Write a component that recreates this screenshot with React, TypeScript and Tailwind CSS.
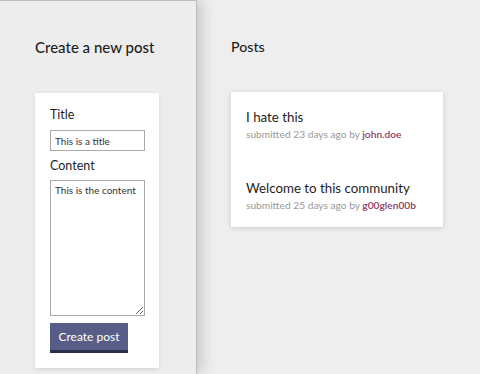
export default function App() {
  return (
    <div
      className="flex w-[480px] h-[374px] overflow-hidden bg-[#eeeeee] text-[#222]"
      style={{ fontFamily: 'Lato, "Open Sans", sans-serif' }}
    >
      <div className="relative z-10 flex flex-col w-[197px] shrink-0 h-full bg-[#ededed] border-t border-r border-[#bdbdbd] shadow-[4px_0_14px_rgba(0,0,0,0.18)] pl-[35px] pr-[37px]">
        <h1 className="mt-[36px] whitespace-nowrap text-[15px] leading-[20px] font-medium text-[#1e1e1e]">Create a new post</h1>
        <div className="mt-[36px] bg-white shadow-[0_1px_4px_rgba(0,0,0,0.12)] px-[15px] pt-[14px] pb-[15px] flex flex-col">
          <label className="text-[12.5px] leading-[16px] text-[#1e1e1e]">Title</label>
          <input
            defaultValue="This is a title"
            className="mt-[7px] w-[95px] h-[21px] border border-[#a9a9a9] px-[4px] text-[10px] text-[#333] outline-none"
            style={{ fontFamily: 'Lato, sans-serif' }}
          />
          <label className="mt-[7px] text-[12.5px] leading-[16px] text-[#1e1e1e]">Content</label>
          <textarea
            defaultValue="This is the content"
            className="mt-[6px] w-[95px] h-[136px] border border-[#a9a9a9] px-[4px] py-[3px] text-[10px] leading-[13px] text-[#333] outline-none resize-y"
            style={{ fontFamily: 'Lato, sans-serif' }}
          />
          <button className="mt-[7px] self-start w-[78px] h-[30px] bg-[#575d86] border-b-[3px] border-[#2a2f4a] text-white text-[12px] leading-[16px]">
            Create post
          </button>
        </div>
      </div>
      <div className="flex flex-col pl-[34px]">
        <h2 className="mt-[37px] text-[14.2px] leading-[20px] font-medium text-[#1e1e1e]">Posts</h2>
        <div className="mt-[35px] w-[212px] bg-white shadow-[0_1px_5px_rgba(0,0,0,0.15)] px-[15px] pt-[16px] pb-[15px] flex flex-col gap-[38px]">
          <div className="flex flex-col">
            <div className="whitespace-nowrap text-[13.3px] leading-[18px] text-[#1e1e1e]">I hate this</div>
            <div className="mt-[1px] whitespace-nowrap text-[10.2px] leading-[14px] text-[#999]">
              submitted 23 days ago by <span className="text-[#8c3b5f] font-semibold">john.doe</span>
            </div>
          </div>
          <div className="flex flex-col">
            <div className="whitespace-nowrap text-[13.3px] leading-[18px] text-[#1e1e1e]">Welcome to this community</div>
            <div className="mt-[1px] whitespace-nowrap text-[10.2px] leading-[14px] text-[#999]">
              submitted 25 days ago by <span className="text-[#8c3b5f] font-semibold">g00glen00b</span>
            </div>
          </div>
        </div>
      </div>
    </div>
  );
}
